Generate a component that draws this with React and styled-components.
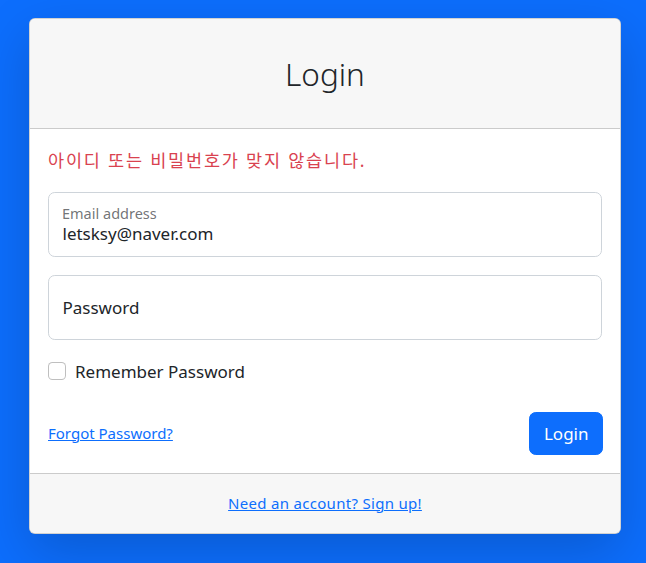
import React from 'react';
import styled, { createGlobalStyle } from 'styled-components';

const GlobalStyle = createGlobalStyle`
  html, body {
    margin: 0;
    padding: 0;
    background: #0d6efd;
    font-family: "Noto Sans", "Noto Sans CJK KR", sans-serif;
    color: #212529;
  }
  * { box-sizing: border-box; }
`;

const Page = styled.div`
  min-height: 563px;
  padding: 18px 0 0 29px;
`;

const Card = styled.div`
  width: 592px;
  background: #fff;
  border: 1px solid rgba(0, 0, 0, 0.175);
  border-radius: 6px;
  box-shadow: 0 18px 54px rgba(0, 0, 0, 0.175);
  overflow: hidden;
`;

const CardHeader = styled.div`
  background: #f7f7f7;
  border-bottom: 1px solid rgba(0, 0, 0, 0.175);
  padding: 9px 18px;
`;

const Title = styled.h3`
  margin: 26.5px 0;
  text-align: center;
  font-size: 31.5px;
  font-weight: 300;
  line-height: 1.2;
`;

const CardBody = styled.div`
  padding: 18px;
`;

const ErrorText = styled.div`
  color: #d9424f;
  font-size: 17.5px;
  line-height: 27px;
  margin-bottom: 18px;
  letter-spacing: 1.8px;
`;

const Floating = styled.div`
  position: relative;
  margin-bottom: 18px;
`;

const Input = styled.input`
  display: block;
  width: 100%;
  height: 65px;
  border: 1px solid #ced4da;
  border-radius: 6.75px;
  padding: ${p => (p.$filled ? '29px 13.5px 10px' : '18px 13.5px')};
  font-family: inherit;
  font-size: 17px;
  color: #212529;
  background: #fff;
  outline: none;
  &::placeholder { color: #212529; }
`;

const FloatLabel = styled.label`
  position: absolute;
  top: 11px;
  left: 14px;
  font-size: 14.5px;
  color: rgba(33, 37, 41, 0.65);
  pointer-events: none;
`;

const CheckRow = styled.div`
  display: flex;
  align-items: center;
  height: 27px;
  gap: 9px;
`;

const CheckBox = styled.span`
  width: 18px;
  height: 18px;
  border: 1px solid rgba(0, 0, 0, 0.25);
  border-radius: 4.5px;
  background: #fff;
`;

const CheckLabel = styled.label`
  font-size: 17px;
`;

const ActionRow = styled.div`
  display: flex;
  align-items: center;
  justify-content: space-between;
  margin-top: 27px;
`;

const SmallLink = styled.a`
  color: #0d6efd;
  text-decoration: underline;
  font-size: 15px;
  line-height: 23.6px;
  letter-spacing: ${p => (p.$wide ? '0.3px' : '0')};
`;

const Button = styled.button`
  background: #0d6efd;
  color: #fff;
  border: 1px solid #0d6efd;
  border-radius: 6.75px;
  height: 43px;
  padding: 0 13.5px;
  margin-right: -1px;
  font-family: inherit;
  font-size: 17px;
`;

const CardFooter = styled.div`
  background: #f7f7f7;
  border-top: 1px solid rgba(0, 0, 0, 0.175);
  padding: 18px;
  text-align: center;
  line-height: 23.6px;
`;

export default function App() {
  return (
    <>
      <GlobalStyle />
      <Page>
        <Card>
          <CardHeader>
            <Title>Login</Title>
          </CardHeader>
          <CardBody>
            <ErrorText>아이디 또는 비밀번호가 맞지 않습니다.</ErrorText>
            <Floating>
              <Input $filled type="email" defaultValue="letsksy@naver.com" />
              <FloatLabel>Email address</FloatLabel>
            </Floating>
            <Floating>
              <Input type="password" placeholder="Password" />
            </Floating>
            <CheckRow>
              <CheckBox />
              <CheckLabel>Remember Password</CheckLabel>
            </CheckRow>
            <ActionRow>
              <SmallLink href="#">Forgot Password?</SmallLink>
              <Button>Login</Button>
            </ActionRow>
          </CardBody>
          <CardFooter>
            <SmallLink $wide href="#">Need an account? Sign up!</SmallLink>
          </CardFooter>
        </Card>
      </Page>
    </>
  );
}
